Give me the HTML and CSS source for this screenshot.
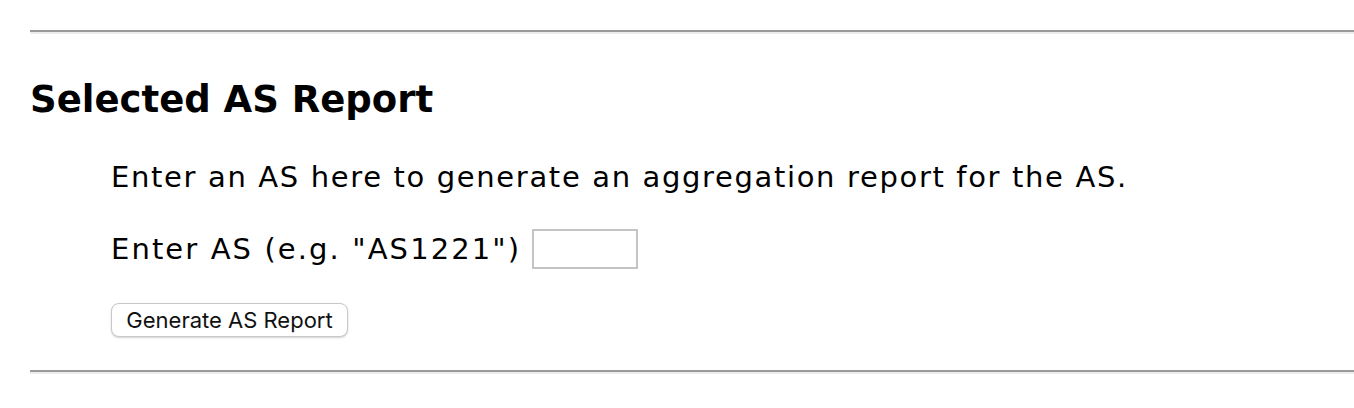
FILE: index.html
```html
<!DOCTYPE html>
<html>
<head>
<meta charset="utf-8">
<link rel="stylesheet" href="styles.css">
</head>
<body>
<div class="page">
  <hr class="rule">
  <h2 class="title">Selected AS Report</h2>
  <div class="content">
    <p class="intro">Enter an AS here to generate an aggregation report for the AS.</p>
    <div class="field-row">
      <label class="field-label" for="as">Enter AS (e.g. "AS1221")</label>
      <input class="field-input" id="as" type="text">
    </div>
    <button class="btn" type="button">Generate AS Report</button>
  </div>
  <hr class="rule rule-bottom">
</div>
</body>
</html>
```

FILE: styles.css
```css
html, body {
  margin: 0;
  padding: 0;
  background: #ffffff;
}
body {
  font-family: "DejaVu Sans", Verdana, sans-serif;
  color: #000;
}
.page {
  padding: 30px 0 0 30px;
}
.rule {
  margin: 0;
  border: 0;
  height: 2px;
  background: #9a9a9a;
  border-bottom: 2px solid #ececec;
}
.title {
  margin: 44px 0 0 0;
  font-size: 37px;
  line-height: 44px;
  font-weight: bold;
}
.content {
  padding-left: 81px;
  padding-top: 38px;
}
.intro {
  margin: 0;
  font-size: 29px;
  line-height: 34px;
  letter-spacing: 1.65px;
}
.field-row {
  display: flex;
  align-items: center;
  gap: 11px;
  margin-top: 35px;
  height: 40px;
}
.field-label {
  font-size: 29px;
  line-height: 34px;
  letter-spacing: 2.1px;
}
.field-input {
  box-sizing: border-box;
  width: 106px;
  height: 40px;
  margin: 0;
  border: 2px solid #c4c4c4;
  background: #fff;
  padding: 0 6px;
  font-size: 24px;
}
.btn {
  display: block;
  margin-top: 34px;
  box-sizing: border-box;
  width: 237px;
  height: 34px;
  padding: 0;
  background: #fff;
  border: 1px solid #c8c8c8;
  border-radius: 8px;
  box-shadow: 0 1px 2px rgba(0,0,0,0.18);
  font-family: Inter, "Noto Sans", sans-serif;
  font-size: 22px;
  color: #111;
}
.rule-bottom {
  margin-top: 33px;
}
```
